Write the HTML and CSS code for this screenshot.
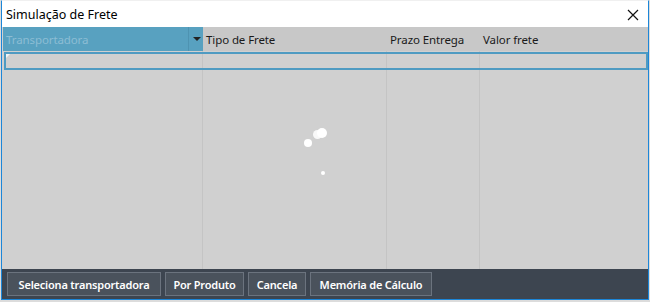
FILE: index.html
```html
<!DOCTYPE html>
<html>
<head>
<meta charset="UTF-8">
<link rel="stylesheet" href="styles.css">
</head>
<body>
 <div class="window">
   <div class="titlebar">
     <span class="title">Simulação de Frete</span>
     <svg class="close" width="12" height="12" viewBox="0 0 12 12"><path d="M1 1 L11 11 M11 1 L1 11" stroke="#111" stroke-width="1.2" fill="none"/></svg>
   </div>
   <div class="grid">
     <div class="head">
       <div class="hcell c1 sorted"><span>Transportadora</span><span class="arrow"></span></div>
       <div class="hcell c2">Tipo de Frete</div>
       <div class="hcell c3">Prazo Entrega</div>
       <div class="hcell c4">Valor frete</div>
     </div>
     <div class="body">
       <div class="cols">
         <div class="col c1"></div>
         <div class="col c2"></div>
         <div class="col c3"></div>
         <div class="col c4"></div>
       </div>
       <div class="row-sel"><span class="corner"></span></div>
       <div class="spinner">
         <span class="dot d1"></span>
         <span class="dot d2"></span>
         <span class="dot d3"></span>
         <span class="dot d4"></span>
       </div>
     </div>
   </div>
   <div class="footer">
     <button class="btn btn-sel">Seleciona transportadora</button>
     <button class="btn btn-prod">Por Produto</button>
     <button class="btn btn-canc">Cancela</button>
     <button class="btn btn-mem">Memória de Cálculo</button>
   </div>
 </div>
</body>
</html>
```

FILE: styles.css
```css
html, body {
  margin: 0;
  padding: 0;
  background: #dcdcdc;
}

body {
  width: 650px;
  height: 302px;
  font-family: "Noto Sans", "Open Sans", sans-serif;
  font-size: 12px;
}

.window {
  margin-left: 1px;
  width: 646px;
  height: 298px;
  border: 1px solid #1c86d8;
  border-top: 1px solid #f0f0f0;
  background: #d0d0d0;
  display: flex;
  flex-direction: column;
}

.titlebar {
  height: 26px;
  background: #fff;
  display: flex;
  align-items: center;
  justify-content: space-between;
  padding: 0 9px 0 4px;
}

.title {
  color: #000;
  font-size: 12.5px;
  margin-top: 1px;
}

.close {
  margin-top: 2px;
}

.grid {
  flex: 1;
  display: flex;
  flex-direction: column;
  padding-left: 1px;
}

.head {
  height: 24px;
  display: flex;
  background: #c8c8c8;
}

.hcell {
  display: flex;
  align-items: center;
  padding-left: 3px;
  color: #1a1a1a;
  font-size: 11.5px;
  letter-spacing: -0.1px;
  box-sizing: border-box;
}

.c1 { width: 200px; }
.c2 { width: 184px; }
.c3 { width: 93px; }
.c4 { flex: 1; }

.hcell.sorted {
  background: #58a1c0;
  color: #8cbdd4;
  justify-content: space-between;
  padding-right: 0;
}

.arrow {
  width: 14px;
  height: 24px;
  border-left: 1px solid #4e93b1;
  position: relative;
}

.arrow::after {
  content: "";
  position: absolute;
  left: 4px;
  top: 10px;
  border-left: 4px solid transparent;
  border-right: 4px solid transparent;
  border-top: 4px solid #222;
}

.body {
  flex: 1;
  position: relative;
  background: #d0d0d0;
}

.cols {
  display: flex;
  height: 100%;
}

.col {
  box-sizing: border-box;
  border-right: 1px solid #c4c4c4;
  height: 100%;
}

.col.c4 { border-right: none; }

.row-sel {
  position: absolute;
  left: 1px;
  right: 0;
  top: 1px;
  height: 14px;
  border: 2px solid #4f9bc2;
}

.corner {
  position: absolute;
  left: 0;
  top: 0;
  border-top: 4px solid #f4f4f4;
  border-right: 4px solid transparent;
}

.spinner {
  position: absolute;
  left: 294px;
  top: 74px;
  width: 40px;
  height: 60px;
}

.dot {
  position: absolute;
  background: #fff;
  border-radius: 50%;
}

.d1 { left: 7px; top: 14px; width: 8px; height: 8px; }
.d2 { left: 16px; top: 5px; width: 9px; height: 9px; opacity: 0.85; }
.d3 { left: 20px; top: 3px; width: 10px; height: 10px; }
.d4 { left: 24px; top: 46px; width: 4px; height: 4px; }

.footer {
  height: 30px;
  background: #3d4550;
  display: flex;
  align-items: center;
  gap: 4px;
  padding-left: 5px;
}

.btn {
  height: 24px;
  margin: 0;
  padding: 0;
  background: #4a525c;
  border: 1px solid #6b737e;
  color: #fff;
  font-family: "Noto Sans", "Open Sans", sans-serif;
  font-size: 11px;
  letter-spacing: -0.2px;
  font-weight: 600;
  text-align: center;
}

.btn-sel { width: 154px; }
.btn-prod { width: 79px; }
.btn-canc { width: 58px; }
.btn-mem { width: 122px; }
```
